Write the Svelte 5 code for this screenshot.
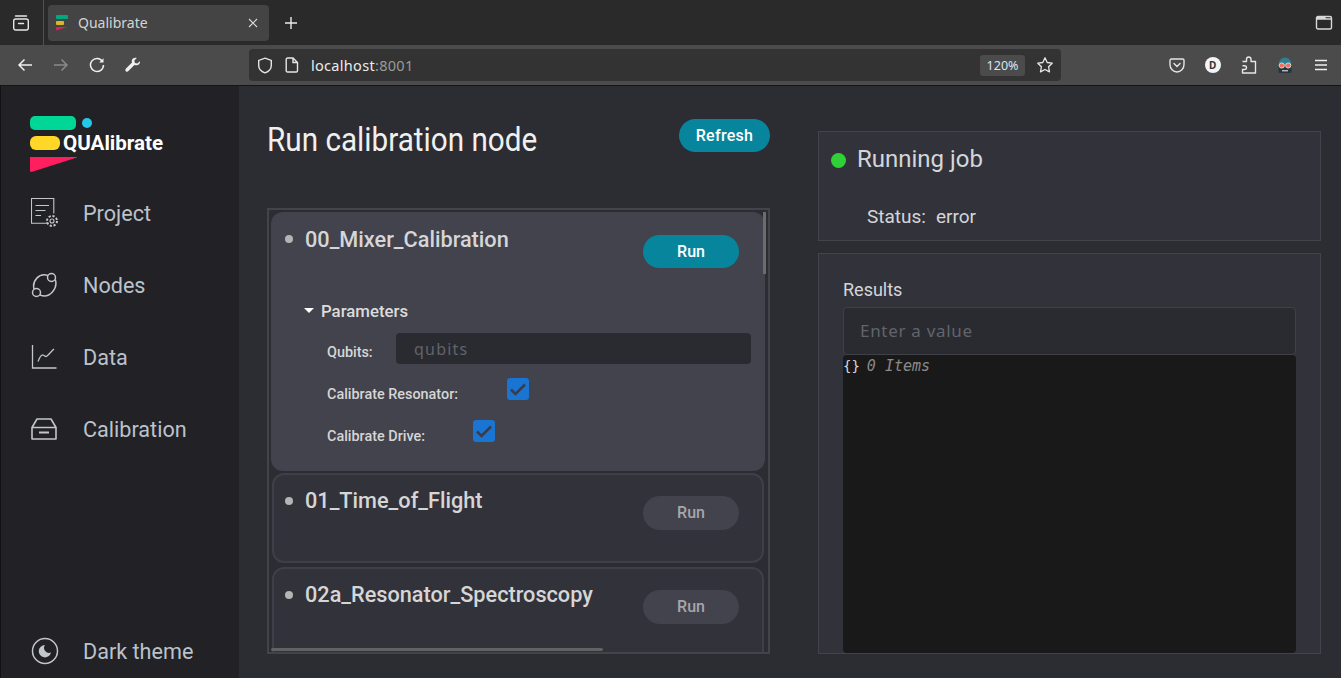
<script>
  const navItems = [
    { label: 'Project', icon: 'project' },
    { label: 'Nodes', icon: 'nodes' },
    { label: 'Data', icon: 'data' },
    { label: 'Calibration', icon: 'calibration' }
  ];
</script>

<div class="window">
  <div class="tabbar">
    <div class="tab-left">
      <svg class="ico" width="18" height="18" viewBox="0 0 18 18" fill="none" stroke="#e6e6e6" stroke-width="1.4">
        <rect x="1.7" y="5" width="14.6" height="11" rx="2" />
        <path d="M3.5 2h11M6.5 9.5h5" stroke-linecap="round" />
      </svg>
    </div>
    <div class="tab">
      <span class="favicon">
        <i class="fav-a"></i><i class="fav-b"></i><i class="fav-c"></i>
      </span>
      <span class="tab-title">Qualibrate</span>
      <svg class="tab-close" width="10" height="10" viewBox="0 0 10 10" stroke="#d8d8d8" stroke-width="1.1">
        <path d="M1 1l8 8M9 1l-8 8" />
      </svg>
    </div>
    <svg class="tab-plus" width="14" height="14" viewBox="0 0 14 14" stroke="#ececec" stroke-width="1.4">
      <path d="M7 1v12M1 7h12" />
    </svg>
    <svg class="tab-list" width="18" height="16" viewBox="0 0 18 16" fill="none" stroke="#d8d8d8" stroke-width="1.4">
      <rect x="1.5" y="1.5" width="15" height="12.5" rx="1.5" />
      <path d="M2 4h7.5l1-1.5M9.5 4h7" fill="none" />
      <path d="M2 2h8v2H2z" fill="#d8d8d8" stroke="none" />
    </svg>
  </div>

  <div class="toolbar">
    <div class="nav-buttons">
      <svg width="16" height="16" viewBox="0 0 16 16" fill="none" stroke="#f0f0f0" stroke-width="1.5"><path d="M15 8H2M7.5 2.5L2 8l5.5 5.5" /></svg>
      <svg width="16" height="16" viewBox="0 0 16 16" fill="none" stroke="#8a8a8a" stroke-width="1.5"><path d="M1 8h13M8.5 2.5L14 8l-5.5 5.5" /></svg>
      <svg width="16" height="16" viewBox="0 0 16 16" fill="none" stroke="#f0f0f0" stroke-width="1.5"><path d="M13.5 4.5A6.5 6.5 0 1 0 14.5 8" /><path d="M14.5 1.2v4.3h-4.3z" fill="#f0f0f0" stroke="none" /></svg>
      <svg width="16" height="16" viewBox="0 0 16 16" fill="#f0f0f0"><path d="M15 4.2l-2.7 2.4-2.4-.7-.6-2.4L11.8.9C9.6.1 7.2 1.2 6.8 3.4c-.1.7 0 1.4.2 2L1 11.6c-.8.8-.8 1.9-.2 2.6.7.7 1.8.7 2.6-.1l6-6.1c2.9 1 6.2-1 5.6-3.8z" /></svg>
    </div>
    <div class="urlbar">
      <svg width="16" height="17" viewBox="0 0 16 17" fill="none" stroke="#e6e6e6" stroke-width="1.4"><path d="M8 1.2l6.3 2.2v5c0 3.5-3 6.2-6.3 7.4C4.7 14.600 1.700 11.900 1.700 8.400v-5z" /></svg>
      <svg class="page-ico" width="14" height="16" viewBox="0 0 14 16" fill="none" stroke="#e6e6e6" stroke-width="1.4"><path d="M2.500 1h5.500l4.500 4.500v8.200c0 .8-.6 1.300-1.300 1.300H2.500c-.8 0-1.300-.6-1.300-1.300V2.300C1.200 1.600 1.800 1 2.500 1zM8 1v4.500h4.500" /></svg>
      <span class="url">localhost<span class="port">:8001</span></span>
      <span class="zoom-pill">120%</span>
      <svg class="star" width="18" height="18" viewBox="0 0 18 18" fill="none" stroke="#e6e6e6" stroke-width="1.3" stroke-linejoin="round"><path d="M9 1.800l2.200 4.700 5 .7-3.600 3.600.9 5.100L9 13.500l-4.500 2.400.9-5.100L1.800 7.200l5-.7z" /></svg>
    </div>
    <div class="ext-buttons">
      <svg width="16" height="15" viewBox="0 0 16 15" fill="none" stroke="#e6e6e6" stroke-width="1.4"><path d="M2.300 1h11.400c.7 0 1.300.6 1.300 1.300v4.200c0 4.200-3.200 7.500-7 7.500s-7-3.300-7-7.500V2.300C1 1.600 1.600 1 2.300 1z" /><path d="M5 5.500l3 3 3-3" stroke-linecap="round" /></svg>
      <span class="ext-d">D</span>
      <svg width="16" height="18" viewBox="0 0 16 18" fill="none" stroke="#e6e6e6" stroke-width="1.4" stroke-linejoin="round"><path d="M1.500 5.500h4V3.200C5.500 1.800 6.500 1 7.700 1s2.300.8 2.300 2.200v2.300h4.500V17H1.500v-3.500h2c1.200 0 2-.8 2-1.900s-.8-1.900-2-1.900h-2" /></svg>
      <svg width="18" height="17" viewBox="0 0 18 17">
        <path d="M2.500 9C2.500 4 5 .5 9 .5S15.500 4 15.500 9z" fill="#2f7f93" />
        <rect x="2.500" y="8" width="13" height="8" rx="1.500" fill="#27363d" />
        <circle cx="5.800" cy="8.500" r="2.600" fill="#f0705a" stroke="#e8e8e8" stroke-width=".8" />
        <circle cx="12.200" cy="8.500" r="2.600" fill="#f0705a" stroke="#e8e8e8" stroke-width=".8" />
        <rect x="6" y="13" width="6" height="1.400" fill="#bbb" />
      </svg>
      <svg width="14" height="12" viewBox="0 0 14 12" stroke="#f0f0f0" stroke-width="1.4"><path d="M1 1.500h12M1 6h12M1 10.500h12" /></svg>
    </div>
  </div>

  <div class="page">
    <aside class="sidebar">
      <div class="logo">
        <div class="logo-row first"><i class="bar-green"></i><i class="logo-dot"></i></div>
        <div class="logo-row second"><i class="bar-yellow"></i><span class="logo-text">QUAlibrate</span></div>
        <i class="logo-wedge"></i>
      </div>

      <nav class="nav">
        {#each navItems as item}
          <div class="nav-item">
            <span class="nav-icon">
              {#if item.icon === 'project'}
                <svg width="28" height="30" viewBox="0 0 28 30" fill="none" stroke="#c3c6cc" stroke-width="1.100">
                  <path d="M17 25.200H.500V.500h22.300v15" />
                  <path d="M4.500 7.500h13.500M4.500 12.500h10M4.500 17.500h5.500" />
                  <circle cx="21" cy="23" r="2" />
                  <circle cx="21" cy="23" r="5" stroke-width="2" stroke-dasharray="2.200 1.700" />
                </svg>
              {:else if item.icon === 'nodes'}
                <svg width="26" height="26" viewBox="0 0 26 26" fill="none" stroke="#c3c6cc" stroke-width="1.500">
                  <circle cx="20.500" cy="5.500" r="4" />
                  <circle cx="5.500" cy="20.500" r="4" />
                  <path d="M3 17C1 9 8 .5 16.800 3.500M24.300 7.500C27 16 19 27 9 23" />
                </svg>
              {:else if item.icon === 'data'}
                <svg width="26" height="26" viewBox="0 0 26 26" fill="none" stroke="#c3c6cc" stroke-width="1.300">
                  <path d="M1.500 1v23h24" />
                  <path d="M7 17.500c2-5 3.500-7 5-6.500s2 2.500 4 1 5-5.500 7-7" />
                </svg>
              {:else if item.icon === 'calibration'}
                <svg width="26" height="22" viewBox="0 0 26 22" fill="none" stroke="#c3c6cc" stroke-width="1.600">
                  <path d="M6 1h14l5 8.500V21H1V9.500zM1 9.500h24" stroke-linejoin="round" />
                  <path d="M8 14.500h10" stroke-width="2" />
                </svg>
              {/if}
            </span>
            <span class="nav-label">{item.label}</span>
          </div>
        {/each}
      </nav>

      <div class="nav-item theme">
        <span class="nav-icon">
          <svg width="28" height="28" viewBox="0 0 28 28" fill="none">
            <circle cx="14" cy="14" r="12.500" stroke="#c3c6cc" stroke-width="1.500" />
            <path d="M14 8A6.200 6.200 0 1 0 20 15.500 5 5 0 0 1 14 8z" fill="#c3c6cc" />
          </svg>
        </span>
        <span class="nav-label">Dark theme</span>
      </div>
    </aside>

    <main class="main">
      <section class="left">
        <header class="left-head">
          <h1>Run calibration node</h1>
          <button class="btn primary refresh">Refresh</button>
        </header>

        <div class="list">
          <div class="card active">
            <div class="card-head">
              <i class="bullet"></i>
              <span class="card-title">00_Mixer_Calibration</span>
              <button class="btn primary run">Run</button>
            </div>
            <div class="params">
              <div class="params-head"><i class="caret"></i>Parameters</div>
              <div class="param qubits">
                <span>Qubits:</span>
                <input class="qubits-input" placeholder="qubits" />
              </div>
              <div class="param"><span>Calibrate Resonator:</span><i class="check res"><svg width="22" height="22" viewBox="0 0 22 22" fill="none" stroke="#3b3c45" stroke-width="2.500"><path d="M4 11.500l4.500 4.500L18 6.500" /></svg></i></div>
              <div class="param"><span>Calibrate Drive:</span><i class="check drv"><svg width="22" height="22" viewBox="0 0 22 22" fill="none" stroke="#3b3c45" stroke-width="2.500"><path d="M4 11.500l4.500 4.500L18 6.500" /></svg></i></div>
            </div>
          </div>

          <div class="card">
            <div class="card-head">
              <i class="bullet"></i>
              <span class="card-title">01_Time_of_Flight</span>
              <button class="btn muted run">Run</button>
            </div>
          </div>

          <div class="card cut">
            <div class="card-head">
              <i class="bullet"></i>
              <span class="card-title">02a_Resonator_Spectroscopy</span>
              <button class="btn muted run">Run</button>
            </div>
          </div>

          <i class="scroll-v"></i>
          <i class="scroll-h"></i>
        </div>
      </section>

      <section class="right">
        <div class="panel job">
          <div class="job-head"><i class="job-dot"></i>Running job</div>
          <div class="job-status"><span>Status:</span><span>error</span></div>
        </div>
        <div class="panel results">
          <div class="results-title">Results</div>
          <input class="results-input" placeholder="Enter a value" />
          <div class="json"><span class="braces">&#123;&#125;</span><em>0 Items</em></div>
        </div>
      </section>
    </main>
  </div>
</div>

<style>
  :global(body) {
    margin: 0;
    background: #2c2d33;
  }
  i {
    display: block;
    font-style: normal;
  }
  svg {
    display: block;
    flex: none;
  }
  .window {
    width: 1341px;
    height: 678px;
    overflow: hidden;
    display: flex;
    flex-direction: column;
    font-family: Roboto, "Liberation Sans", sans-serif;
  }

  .tabbar {
    height: 45px;
    flex: none;
    display: flex;
    align-items: center;
    background: #2a2a2a;
    box-sizing: border-box;
  }
  .tab-left {
    width: 44px;
    height: 45px;
    box-sizing: border-box;
    border-right: 1px solid #525252;
    display: flex;
    align-items: center;
    justify-content: center;
    padding-right: 2px;
  }
  .tab {
    margin-left: 4px;
    width: 221px;
    height: 36px;
    background: #444444;
    border-radius: 4px;
    display: flex;
    align-items: center;
    padding: 0 11px 0 8px;
    box-sizing: border-box;
  }
  .favicon {
    width: 16px;
    display: flex;
    flex-direction: column;
    gap: 2px;
    margin-right: 6px;
  }
  .favicon i {
    height: 4px;
    border-radius: 1px;
  }
  .fav-a {
    width: 12px;
    background: #00a87e;
  }
  .fav-b {
    width: 8px;
    background: #d6b82a;
  }
  .fav-c {
    width: 13px;
    background: #d9245a;
    clip-path: polygon(0 0, 100% 0, 0 100%);
  }
  .tab-title {
    flex: 1;
    color: #d4d4d4;
    font: 14px "Noto Sans", sans-serif;
  }
  .tab-plus {
    margin-left: 15px;
  }
  .tab-list {
    margin-left: auto;
    margin-right: 8px;
  }

  .toolbar {
    height: 41px;
    flex: none;
    box-sizing: border-box;
    border-bottom: 1px solid #151515;
    background: #4b4b4b;
    display: flex;
    align-items: center;
  }
  .nav-buttons {
    width: 249px;
    box-sizing: border-box;
    padding: 0 0 0 17px;
    display: flex;
    gap: 20px;
    align-items: center;
  }
  .urlbar {
    width: 812px;
    height: 32px;
    background: #333333;
    border-radius: 4px;
    display: flex;
    align-items: center;
    padding: 0 7px 0 8px;
    box-sizing: border-box;
  }
  .page-ico {
    margin-left: 12px;
  }
  .url {
    margin-left: 12px;
    flex: 1;
    color: #ececec;
    font: 14.500px "Noto Sans", sans-serif;
    letter-spacing: 0.300px;
  }
  .port {
    color: #9a9a9a;
  }
  .zoom-pill {
    width: 45px;
    height: 21px;
    background: #4b4b4b;
    border-radius: 3px;
    color: #d8e4f0;
    font: 12.500px/21px "Noto Sans", sans-serif;
    text-align: center;
  }
  .star {
    margin-left: 11px;
  }
  .ext-buttons {
    flex: 1;
    display: flex;
    align-items: center;
    justify-content: space-between;
    padding: 0 13px 0 108px;
  }
  .ext-d {
    width: 16px;
    height: 16px;
    border-radius: 50%;
    background: #f4f4f4;
    color: #333;
    font: 700 10px/16px "Noto Sans", sans-serif;
    text-align: center;
  }

  .page {
    flex: 1;
    min-height: 0;
    display: flex;
  }
  .sidebar {
    width: 239px;
    flex: none;
    box-sizing: border-box;
    background: #212126;
    border-left: 1px solid #121212;
    padding: 30px 0 11px 29px;
    display: flex;
    flex-direction: column;
  }
  .logo {
    height: 56px;
    display: flex;
    flex-direction: column;
  }
  .logo-row {
    display: flex;
    align-items: center;
  }
  .logo-row.first {
    height: 14px;
    gap: 6px;
  }
  .bar-green {
    width: 46px;
    height: 14px;
    border-radius: 5px;
    background: #00d696;
  }
  .logo-dot {
    width: 10px;
    height: 10px;
    border-radius: 50%;
    background: #26c6e8;
  }
  .logo-row.second {
    margin-top: 6px;
    height: 14px;
  }
  .bar-yellow {
    width: 30px;
    height: 14px;
    border-radius: 6px;
    background: #ffd727;
  }
  .logo-text {
    margin-left: 3px;
    color: #fff;
    font-size: 20.600px;
    font-weight: 700;
    line-height: 14px;
  }
  .logo-wedge {
    margin-top: 7px;
    width: 47px;
    height: 15px;
    background: #ff1f5f;
    clip-path: polygon(0 0, 100% 0, 100% 4%, 3% 100%, 0 95%);
  }
  .nav {
    flex: 1;
    margin-top: 5px;
    display: flex;
    flex-direction: column;
  }
  .nav-item {
    height: 72px;
    flex: none;
    display: flex;
    align-items: center;
    color: #bcc2cb;
    font-size: 21.600px;
  }
  .nav-item.theme {
    height: 32px;
  }
  .nav-icon {
    width: 53px;
    flex: none;
    display: flex;
    align-items: center;
  }
  .nav-icon svg {
    margin-left: 1px;
  }

  .main {
    flex: 1;
    min-width: 0;
    background: #2c2d33;
    display: flex;
    padding: 0 20px 24px 28px;
    gap: 48px;
  }
  .left,
  .right {
    width: 503px;
    flex: none;
    display: flex;
    flex-direction: column;
    box-sizing: border-box;
  }
  .left-head {
    height: 122px;
    flex: none;
    display: flex;
    justify-content: space-between;
    align-items: flex-start;
    box-sizing: border-box;
    padding-top: 33px;
  }
  h1 {
    margin: 0;
    color: #f0f0f0;
    font-size: 34px;
    font-weight: 400;
    line-height: 40px;
    transform: scaleX(0.873);
    transform-origin: left;
    white-space: nowrap;
  }
  .btn {
    border: 0;
    padding: 0;
    font-family: inherit;
    font-size: 16px;
    font-weight: 500;
    border-radius: 17px;
  }
  .primary {
    height: 33px;
    background: #07859d;
    color: #fff;
  }
  .muted {
    height: 34px;
    padding-bottom: 1px;
    background: #42434d;
    color: #a5a6ab;
  }
  .refresh {
    width: 91px;
    letter-spacing: 0.300px;
  }
  .list {
    flex: 1;
    min-height: 0;
    position: relative;
    overflow: hidden;
    box-sizing: border-box;
    border: 2px solid #42434b;
    padding: 2px 3px 0 2px;
    display: flex;
    flex-direction: column;
  }
  .card {
    flex: none;
    box-sizing: border-box;
    background: #32333a;
    border: 2px solid #3e3f48;
    border-radius: 12px;
    height: 90px;
    margin: 2px 1px 2px 1px;
    padding: 0 0 0 11px;
  }
  .card.active {
    height: 259px;
    margin: 0;
    background: #42434d;
    border: 0;
    padding: 0 0 0 14px;
  }
  .card.cut {
    height: 110px;
    margin-bottom: 0;
  }
  .card-head {
    display: flex;
    align-items: flex-start;
    height: 56px;
    padding-top: 13px;
    box-sizing: border-box;
  }
  .card.active .card-head {
    padding-top: 15px;
  }
  .bullet {
    width: 8px;
    height: 8px;
    margin: 9px 12px 0 0;
    border-radius: 50%;
    background: #b4b4b4;
  }
  .card.active .bullet {
    margin-top: 8px;
  }
  .card-title {
    width: 338px;
    color: #d6d6d6;
    font-size: 21.700px;
    font-weight: 500;
    line-height: 26px;
    white-space: nowrap;
  }
  .run {
    width: 96px;
    margin-top: 8px;
  }
  .params {
    margin-top: 33px;
    padding-left: 19px;
    color: #dcdcdc;
  }
  .params-head {
    display: flex;
    align-items: center;
    font-size: 16.800px;
    font-weight: 500;
    height: 20px;
  }
  .caret {
    width: 0;
    height: 0;
    border: 5px solid transparent;
    border-top: 5px solid #fff;
    border-bottom: 0;
    margin-right: 7px;
    margin-top: -1px;
  }
  .param {
    display: flex;
    align-items: center;
    margin-left: 23px;
    height: 42px;
    font-size: 14.400px;
    font-weight: 500;
    color: #d6d6d6;
  }
  .param span {
    padding-top: 2px;
  }
  .param.qubits {
    margin-top: 11px;
    height: 32px;
  }
  .param.qubits span {
    padding-top: 8px;
    width: 69px;
    flex: none;
  }
  .param.qubits + .param {
    margin-top: 8px;
  }
  .qubits-input {
    width: 355px;
    height: 31px;
    box-sizing: border-box;
    background: #2a2b30;
    border: 0;
    border-radius: 4px;
    padding: 1px 18px 0;
    font: 16px "Noto Sans", sans-serif;
    letter-spacing: 1.200px;
  }
  .qubits-input::placeholder {
    color: #62636a;
    opacity: 1;
  }
  .check {
    width: 22px;
    height: 22px;
    border-radius: 3px;
    background: #1a74d2;
    margin-top: -9px;
  }
  .check.res {
    margin-left: 49px;
  }
  .check.drv {
    margin-left: 48px;
  }
  .scroll-v {
    position: absolute;
    right: 2px;
    top: 2px;
    width: 3px;
    height: 62px;
    background: #6b6c70;
  }
  .scroll-h {
    position: absolute;
    left: 2px;
    bottom: 1px;
    width: 332px;
    height: 3px;
    border-radius: 2px;
    background: #626262;
  }

  .right {
    padding-top: 45px;
    gap: 12px;
  }
  .panel {
    box-sizing: border-box;
    background: #32333a;
    border: 1px solid #42434b;
  }
  .job {
    height: 110px;
    flex: none;
    color: #d4d6da;
  }
  .job-head {
    display: flex;
    align-items: center;
    font-size: 24px;
    height: 28px;
    margin-top: 13px;
    padding-left: 12px;
  }
  .job-dot {
    width: 15px;
    height: 15px;
    border-radius: 50%;
    background: #2fd236;
    margin-right: 11px;
    margin-top: 2px;
  }
  .job-status {
    display: flex;
    gap: 10px;
    font-size: 19px;
    margin-top: 32px;
    padding-left: 48px;
  }
  .results {
    flex: 1;
    min-height: 0;
    padding: 24px 24px 0 24px;
    display: flex;
    flex-direction: column;
  }
  .results-title {
    color: #d4d6da;
    font-size: 18px;
    height: 29px;
    line-height: 24px;
  }
  .results-input {
    flex: none;
    width: 453px;
    height: 48px;
    box-sizing: border-box;
    background: #2a2b30;
    border: 1px solid #3f4048;
    border-radius: 4px;
    padding: 0 16px 2px;
    font: 17px "Noto Sans", sans-serif;
    letter-spacing: 0.700px;
  }
  .results-input::placeholder {
    color: #61646c;
    opacity: 1;
  }
  .json {
    flex: 1;
    width: 453px;
    background: #191919;
    border-radius: 4px;
    display: flex;
    align-items: flex-start;
    gap: 7px;
    box-sizing: border-box;
    padding: 3px 0 0 0;
    font: 14px "DejaVu Sans Mono", monospace;
    color: #d8d8d8;
  }
  .json em {
    color: #8a8a8a;
    font-size: 15px;
    line-height: 17px;
  }
</style>
